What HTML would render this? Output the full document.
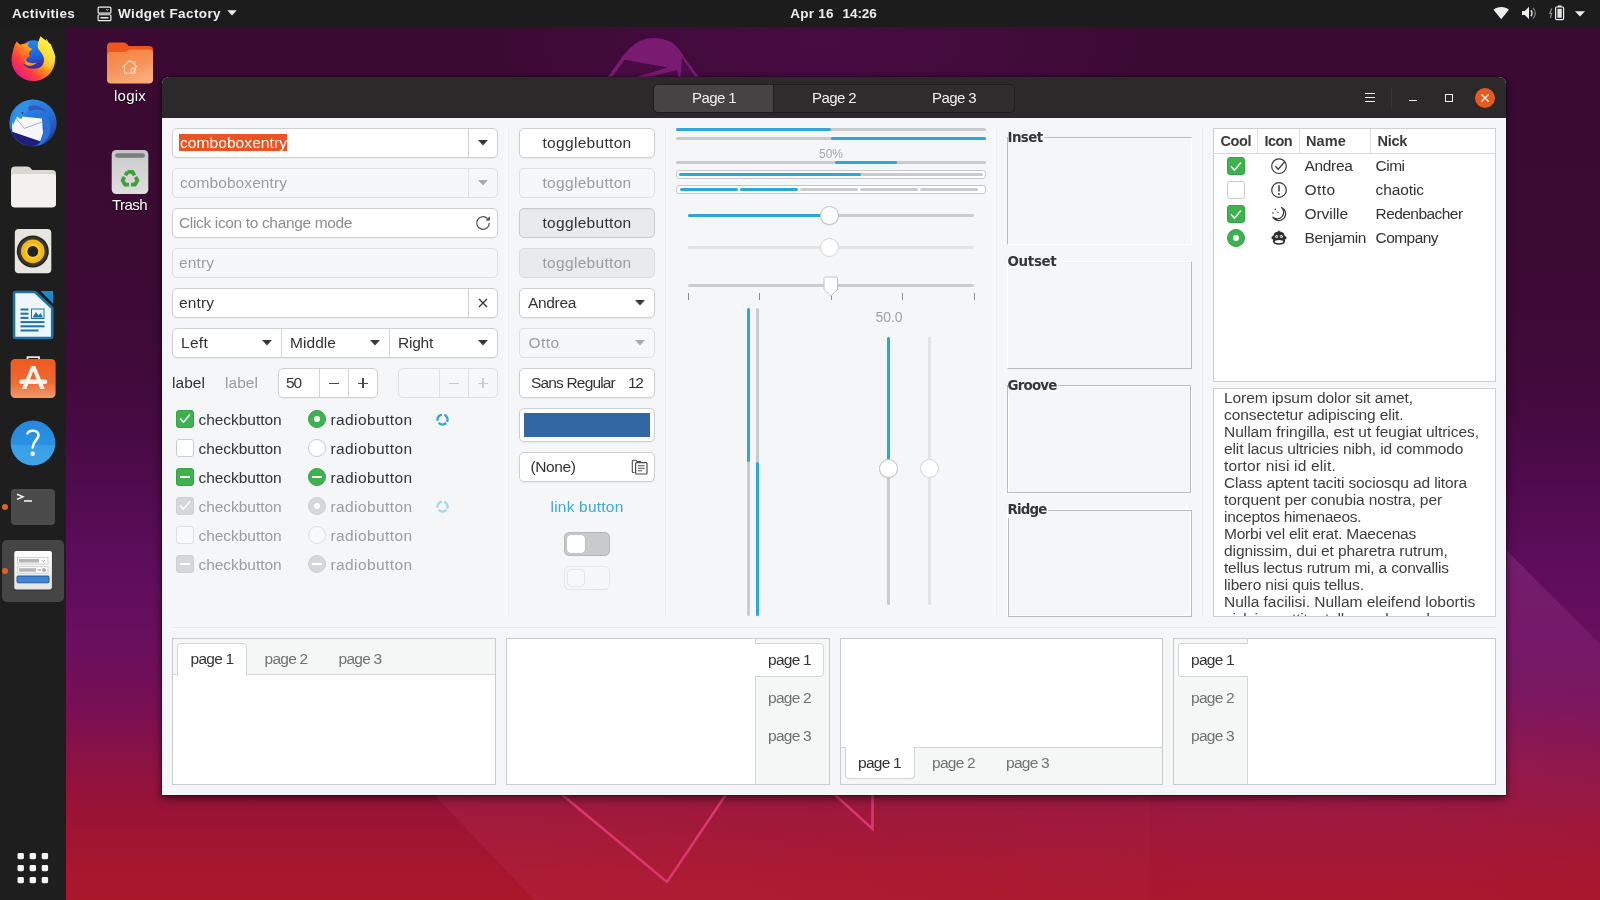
<!DOCTYPE html>
<html lang="en"><head><meta charset="utf-8"><title>Widget Factory</title>
<style>
*{box-sizing:border-box}
html,body{margin:0;padding:0}
body{width:1600px;height:900px;overflow:hidden;position:relative;font-family:"Liberation Sans",sans-serif;font-size:15px;color:#333;
 background:#5a0c50}
.abs,.abs *{position:absolute}
#desk{left:0;top:0;width:1600px;height:900px;overflow:hidden;
 background:
 radial-gradient(ellipse 520px 130px at 1330px 800px, rgba(165,35,85,.38), rgba(165,35,85,0) 100%),
 radial-gradient(ellipse 330px 120px at 820px 40px, rgba(84,12,80,.55), rgba(84,12,80,0) 100%),
 linear-gradient(180deg,#3b0a33 0px,#3c0a34 300px,#430a3e 400px,#4e0b4c 480px,#5c0d5a 560px,#690f5e 640px,#760f56 700px,#8b1243 760px,#9c1434 820px,#a7162d 870px,#aa172b 900px);}
#topbar{left:0;top:0;width:1600px;height:27px;background:#1c1c1c;color:#eeeeec;font-weight:bold;font-size:13.5px}
#dock{left:0;top:27px;width:66px;height:873px;background:#1e1e1e}
#desk{will-change:transform}
.t{white-space:nowrap;line-height:20px;height:20px}
</style></head><body>
<div id="desk" class="abs">
<svg class="abs" style="left:0;top:0" width="1600" height="900" viewBox="0 0 1600 900">
<defs><linearGradient id="fct" x1="0" y1="0" x2="0" y2="1"><stop offset="0" stop-color="#8a2c7c" stop-opacity=".55"/><stop offset="1" stop-color="#8a2c7c" stop-opacity="0"/></linearGradient><linearGradient id="fc2" gradientUnits="userSpaceOnUse" x1="437" y1="0" x2="1150" y2="0"><stop offset="0" stop-color="#c8466e" stop-opacity=".15"/><stop offset="1" stop-color="#c8466e" stop-opacity=".04"/></linearGradient></defs>
<path d="M430 790L534 900H1150V790z" fill="url(#fc2)"/>
<path d="M1500 544L1600 644V830H1500z" fill="url(#fct)"/>
<path d="M607 78L622 57Q631 45 641 40.500Q655 35 671 42Q679 47 684 57L699.500 78z" fill="#7a1b72"/>
<path d="M624.500 59.800L668 67.600 633 78H611.500z" fill="#480c43"/><path d="M645 78L677 70 678.500 78z" fill="#480c43"/><path d="M682 57.500L696 78H680.500z" fill="#4c0d4b"/>
<path d="M560 793L667 882 727 793" fill="none" stroke="#e23a74" stroke-opacity=".9" stroke-width="2.500"/>
<path d="M833 793L872.500 829V793" fill="none" stroke="#e23a74" stroke-opacity=".9" stroke-width="2.500"/>
</svg>
<div id="topbar" class="abs">
 <span class="t" style="letter-spacing:0.30px;left:12px;top:4px">Activities</span>
 <svg style="left:96.500px;top:5.500px" width="15" height="16" viewBox="0 0 16 17"><g fill="none" stroke="#eeeeec" stroke-width="1.3"><rect x="1.2" y="1.2" width="13.6" height="6.3" rx="1"/><rect x="1.2" y="9.3" width="13.6" height="6.3" rx="1"/></g><rect x="3.6" y="11.7" width="8.6" height="1.6" fill="#eeeeec"/><path d="M9.8 3.4l1.2 1.2 1.2-1.2" fill="none" stroke="#eeeeec" stroke-width="1"/></svg>
 <span class="t" style="letter-spacing:0.40px;left:118px;top:4px">Widget Factory</span>
 <svg style="left:227px;top:10px" width="10" height="6" viewBox="0 0 10 6"><path d="M0.3 0.3h9.4L5 5.6z" fill="#eeeeec"/></svg>
 <span class="t" style="letter-spacing:0.24px;left:790.300px;top:4px">Apr 16</span>
 <span class="t" style="letter-spacing:-0.01px;left:842.400px;top:4px">14:26</span>
 <svg style="left:1492px;top:5px" width="18" height="16" viewBox="0 0 18 16"><path d="M9.200 14.200L1.500 4.800C3.500 3 6.200 2 9.200 2s5.700 1 7.700 2.800z" fill="#eeeeec"/></svg>
 <svg style="left:1520px;top:5px" width="18" height="17" viewBox="0 0 18 17"><path d="M2 6h2.800l4.200-4.200v12.400l-4.200-4.200H2z" fill="#eeeeec"/><path d="M10.800 5.200c1.600 1.600 1.600 4.400 0 6" fill="none" stroke="#eeeeec" stroke-width="1.400"/><path d="M13 2.800c3 3 3 7.800 0 10.800" fill="none" stroke="#8a8a8a" stroke-width="1.200"/></svg>
 <svg style="left:1548px;top:4px" width="18" height="18" viewBox="0 0 18 18"><path d="M3.800 4.500L1.800 9.300h1.800L2.400 14" fill="none" stroke="#8e8e8e" stroke-width="1.200"/><rect x="7.600" y="3" width="8" height="12.600" rx="1.200" fill="none" stroke="#eeeeec" stroke-width="1.200"/><rect x="9.800" y="1.400" width="3.600" height="1.600" fill="#eeeeec"/><rect x="9.400" y="4.800" width="4.400" height="9" fill="#dededc"/></svg>
 <svg style="left:1575px;top:10.500px" width="10" height="6" viewBox="0 0 10 6"><path d="M0 0.300h10L5 5.600z" fill="#eeeeec"/></svg>
</div>
<div id="dock" class="abs"></div>
<div class="abs" id="dockicons" style="left:0;top:0;width:66px;height:900px">
<!-- firefox -->
<svg style="left:10px;top:35px" width="47" height="48" viewBox="0 0 47 48">
<defs><linearGradient id="ffg" gradientUnits="userSpaceOnUse" x1="42" y1="6" x2="6" y2="40"><stop offset="0" stop-color="#fff350"/><stop offset="0.28" stop-color="#ffc72e"/><stop offset="0.52" stop-color="#ff8a1c"/><stop offset="0.74" stop-color="#ff3d3f"/><stop offset="1" stop-color="#e2168c"/></linearGradient>
<linearGradient id="ffb" x1="0.4" y1="0" x2="0.55" y2="1"><stop offset="0" stop-color="#1f8bf0"/><stop offset="0.55" stop-color="#1f62dc"/><stop offset="1" stop-color="#3b2495"/></linearGradient>
<linearGradient id="ffy" gradientUnits="userSpaceOnUse" x1="42" y1="6" x2="6" y2="40"><stop offset="0" stop-color="#fff350"/><stop offset="0.3" stop-color="#ffdd38"/><stop offset="0.43" stop-color="#ffb92a"/><stop offset="0.53" stop-color="#ff8a1c"/></linearGradient></defs>
<circle cx="23.300" cy="24.300" r="21.800" fill="url(#ffg)"/>
<path d="M7 6.300L8 0H31L28 12H10z" fill="#1e1e1e"/>
<circle cx="23.500" cy="19.500" r="14.300" fill="url(#ffb)"/>
<path d="M7 6.300c0.800 1.700 2 2.800 3.400 3.400c2-1 4-1.200 5.800-0.800l2.600-2c-0.300 1.600-0.600 2.800-1.200 3.800c1 1.200 2.600 2.400 4.900 3.400c-1.400 1-2.800 2-3.400 3.400c-0.500 1.400-0.200 2.800 0.900 3.800c-1.600 0.400-3 1.500-3.800 3c-0.600 1.400-0.400 3 0.300 4.700H4C1.500 21 2.500 12 7 6.300z" fill="url(#ffg)"/>
<path d="M30.300 1.300C29.300 5 27.200 8 27.800 12C28.500 16 33.400 18 34 24C34.300 28 32 32 28 34.500L40 35 45.500 22 41 9.500z" fill="url(#ffy)"/>
<path d="M36.500 3.500l2.500 5-3-1.500z" fill="#ffe34a"/>
<path d="M14.500 23.500C16.500 27.600 22 29.300 26.800 27.300C24.500 31 19 31.800 15.300 29.200z" fill="#ff971d"/>
</svg>
<!-- thunderbird -->
<svg style="left:8px;top:98px" width="50" height="50" viewBox="0 0 50 50">
<defs><linearGradient id="tbg" x1="0.25" y1="0" x2="0.75" y2="1"><stop offset="0" stop-color="#2d8ee6"/><stop offset="0.5" stop-color="#2670d6"/><stop offset="0.8" stop-color="#2a4db4"/><stop offset="1" stop-color="#2a3596"/></linearGradient></defs>
<circle cx="25" cy="25" r="23.600" fill="url(#tbg)"/>
<path d="M2.500 30C4.500 40 13 47.500 24 48.500L33 44 4.300 33z" fill="#1d1f78"/>
<path d="M6.300 17.700L34 20.500 35 35 32.300 43.300 4.300 33.700 4 27z" fill="#f6f6fb"/>
<path d="M6.500 18.200L16.300 30.300 34.200 24" fill="none" stroke="#8e8e9c" stroke-width="0.700"/>
<path d="M5 27L3.800 22C5 11 14 3 26 1.600C21.500 5 19 9.500 19.500 14C17 14.500 14.500 17 13.200 21.500L9 18.500z" fill="#2f92e8"/>
<circle cx="14.500" cy="15" r="0.900" fill="#142a6a"/>
<path d="M33 13C41 17 44.500 27 41.500 36C39.500 42 35 46 29.500 48C33.500 43 35.500 38 35 32L36.500 30 34.800 28 36 26 34.500 24C35 20 34.500 16.500 33 13z" fill="#2a72d8"/>
<path d="M20 9C26 6 34 8 38.500 14C34 11 27 10.500 22 13z" fill="#3a3aa8" opacity=".55"/>
</svg>
<!-- files -->
<svg style="left:10px;top:165px" width="47" height="44" viewBox="0 0 47 44">
<path d="M1 5.5Q1 1.5 5 1.5h12q2.5 0 4 2l1.2 1.6H42q4 0 4 4V38q0 4-4 4H5q-4 0-4-4z" fill="#dad7d0"/>
<path d="M1 12.5q0-3.500 3.500-3.500h38q3.500 0 3.500 3.500V38.500q0 4-4 4H5q-4 0-4-4z" fill="#f2f1ee"/>
</svg>
<!-- rhythmbox -->
<svg style="left:14px;top:228px" width="38" height="46" viewBox="0 0 38 46">
<rect x="0.8" y="1" width="36.500" height="44.300" rx="4" fill="#e7e5df"/>
<circle cx="18.800" cy="23.400" r="16" fill="#25231f"/><circle cx="18.800" cy="23.400" r="14.500" fill="#3a3731"/>
<circle cx="18.800" cy="23.400" r="11.800" fill="#f0b81b"/><circle cx="18.800" cy="23.400" r="8" fill="#f6c92b"/>
<circle cx="18.800" cy="23.400" r="5.400" fill="#24221e"/>
</svg>
<!-- writer -->
<svg style="left:12px;top:290px" width="42" height="50" viewBox="0 0 42 50">
<path d="M2 3.500Q2 2 3.500 2h19.500L40.200 18v28.500q0 1.500-1.500 1.500H3.500Q2 48 2 46.500z" fill="#eef6fb" stroke="#1b74a8" stroke-width="2.600" stroke-linejoin="round"/>
<path d="M28.500 1h12.700v12.700z" fill="#2289c8"/>
<g fill="#1b74a8"><rect x="8.500" y="18.500" width="8" height="2"/><rect x="8.500" y="22.700" width="8" height="2"/><rect x="8.500" y="26.900" width="8" height="2"/><rect x="8.500" y="31.100" width="24" height="2"/><rect x="8.500" y="35.300" width="24" height="2"/><rect x="8.500" y="39.500" width="18" height="2"/>
<path d="M19 18.500h13.500v10.400H19z M20 19.500v8.400h11.500v-8.400z" fill-rule="evenodd"/><path d="M20.500 27.500l3.500-5.500 2.500 3.500 2-2.500 2.500 4.500z"/></g>
</svg>
<!-- software -->
<svg style="left:9px;top:354px" width="48" height="46" viewBox="0 0 48 46">
<defs><linearGradient id="swg" x1="0" y1="0" x2="0" y2="1"><stop offset="0" stop-color="#ef5a1f"/><stop offset="0.6" stop-color="#ee6a33"/><stop offset="1" stop-color="#f19a6c"/></linearGradient></defs>
<path d="M18.500 6V3.200h11.500V6" fill="none" stroke="#f3e6de" stroke-width="1.800"/>
<rect x="1.600" y="5" width="45" height="39" rx="4.500" fill="url(#swg)"/>
<path d="M12.800 35L22.300 12h4L35.800 35h-4.600L24.300 17 17.400 35z" fill="#fdf3ec"/>
<rect x="10.200" y="25.400" width="28.200" height="4.600" rx="2.300" fill="#fdf3ec"/>
</svg>
<!-- help -->
<svg style="left:10px;top:420px" width="46" height="46" viewBox="0 0 46 46">
<defs><linearGradient id="hlg" x1="0" y1="0" x2="0" y2="1"><stop offset="0" stop-color="#2487de"/><stop offset="0.54" stop-color="#2a92e2"/><stop offset="0.55" stop-color="#3a9fe6"/><stop offset="1" stop-color="#3ea4e8"/></linearGradient></defs>
<circle cx="23" cy="23" r="22.400" fill="url(#hlg)"/>
<path d="M17.500 13.500c1-3.500 10.500-4.500 11 1.500 0.300 4.500-5.500 5.500-5.800 12.500" fill="none" stroke="#f4f8fc" stroke-width="2.600" stroke-linecap="round"/>
<circle cx="22.700" cy="33.800" r="2.300" fill="#f4f8fc"/>
</svg>
<!-- terminal -->
<div style="left:11px;top:489px;width:44px;height:36px;border-radius:4px;background:#4b4b4b"></div>
<svg style="left:15px;top:492px" width="20" height="12" viewBox="0 0 20 12"><path d="M2 2.200l6 2.600-6 2.600" fill="none" stroke="#f2f2f2" stroke-width="1.500"/><rect x="9" y="8.200" width="8" height="1.600" fill="#f2f2f2"/></svg>
<div style="left:2px;top:504px;width:6px;height:6px;border-radius:3px;background:#e0622a"></div>
<!-- widget factory (active) -->
<div style="left:2px;top:540px;width:62px;height:62px;border-radius:5px;background:#454545"></div>
<div style="left:2px;top:568px;width:6px;height:6px;border-radius:3px;background:#e0622a"></div>
<svg style="left:13px;top:550px" width="41" height="42" viewBox="0 0 41 42">
<defs><linearGradient id="wfg" x1="0" y1="0" x2="0" y2="1"><stop offset="0" stop-color="#ffffff"/><stop offset="1" stop-color="#e4e4e4"/></linearGradient></defs>
<rect x="0.500" y="38.500" width="40" height="2" rx="1" fill="#2e2e2e" opacity=".6"/>
<rect x="1.300" y="1" width="37.600" height="38.600" rx="2" fill="url(#wfg)"/>
<rect x="4.500" y="7.500" width="30.500" height="6.500" fill="#fbfbfb" stroke="#c9c9c9" stroke-width=".8"/><rect x="6" y="9" width="20" height="3.500" fill="#b5b5b5"/>
<path d="M28.500 10l1.700 1.700 1.700-1.700" fill="none" stroke="#9a9a9a" stroke-width=".9"/>
<rect x="4.500" y="16.700" width="30.500" height="6.500" fill="#fbfbfb" stroke="#c9c9c9" stroke-width=".8"/><rect x="6" y="18.200" width="17" height="3.500" fill="#b5b5b5"/><rect x="24.500" y="19.400" width="3.500" height="1.200" fill="#a9a9a9"/><circle cx="31" cy="20" r="1.900" fill="#a9a9a9"/>
<rect x="4" y="26" width="32" height="6.800" rx="1" fill="#3d86d3" stroke="#1f4f94" stroke-width=".9"/>
</svg>
<!-- show apps -->
<svg style="left:17px;top:852px" width="32" height="32" viewBox="0 0 32 32"><g fill="#f6f6f6">
<rect x="0.500" y="1" width="6.400" height="6.200" rx="1.400"/><rect x="12.600" y="1" width="6.400" height="6.200" rx="1.400"/><rect x="24.700" y="1" width="6.400" height="6.200" rx="1.400"/>
<rect x="0.500" y="13" width="6.400" height="6.200" rx="1.400"/><rect x="12.600" y="13" width="6.400" height="6.200" rx="1.400"/><rect x="24.700" y="13" width="6.400" height="6.200" rx="1.400"/>
<rect x="0.500" y="25" width="6.400" height="6.200" rx="1.400"/><rect x="12.600" y="25" width="6.400" height="6.200" rx="1.400"/><rect x="24.700" y="25" width="6.400" height="6.200" rx="1.400"/></g></svg>
</div>
<!-- desktop icons -->
<div class="abs" style="left:66px;top:27px;width:100px;height:200px">
<svg style="left:40px;top:14px" width="50" height="44" viewBox="0 0 50 44">
<defs><linearGradient id="fdg" x1="0" y1="0" x2="0.350" y2="1"><stop offset="0" stop-color="#f5823c"/><stop offset="0.6" stop-color="#f6935a"/><stop offset="1" stop-color="#f8ab78"/></linearGradient></defs>
<path d="M1 5.500Q1 1.500 5 1.500h12.500q2.500 0 4 2l1.200 1.600H43q4 0 4 4V38q0 4-4 4H5q-4 0-4-4z" fill="#f0561b"/>
<path d="M1 14.500q0-3.500 3.500-3.500h14q2 0 3.200-1.300q1.200-1.200 3.200-1.200H43.500q3.500 0 3.500 3.500V38.500q0 4-4 4H5q-4 0-4-4z" fill="url(#fdg)"/>
<path d="M16.500 27.500l7.500-7 7.500 7M18.500 26v7.500h11V26M25.300 33.500v-5h2.800v5M29 21.300v2.400" fill="none" stroke="#fde0c4" stroke-opacity=".92" stroke-width="1.100" transform="translate(0 -1.200)"/>
</svg>
<span class="t" style="letter-spacing:0.23px;left:48px;top:59px;color:#fff;text-shadow:0 1px 2px rgba(0,0,0,.8)">logix</span>
<svg style="left:45px;top:122px" width="38" height="46" viewBox="0 0 38 46">
<defs><linearGradient id="trg" x1="0" y1="0" x2="0" y2="1"><stop offset="0" stop-color="#c4c4c4"/><stop offset="0.250" stop-color="#cfcfcf"/><stop offset="1" stop-color="#dedede"/></linearGradient></defs>
<rect x="0.700" y="1" width="36.600" height="44" rx="4.500" fill="url(#trg)"/>
<rect x="4" y="4.200" width="30" height="4.600" rx="2.300" fill="#7d7d7d"/>
<path d="M15.800 21.300H22.200L28.300 31.800 25.100 37.200H12.900L9.700 31.800z" fill="none" stroke="#3f9f3c" stroke-width="4.700" stroke-linejoin="round" stroke-dasharray="11.270 2.400 16.050 2.400 16.050 2.400 4.870" transform="translate(19 29.600) scale(.8) translate(-19 -29.600)"/>
</svg>
<span class="t" style="letter-spacing:-0.56px;left:46px;top:168px;color:#fff;text-shadow:0 1px 2px rgba(0,0,0,.8)">Trash</span>
</div>
<style>
#win{left:162px;top:77px;width:1344px;height:718px;border-radius:7px 7px 0 0;background:#f4f6f7;box-shadow:0 0 0 1px rgba(20,5,20,.22),0 5px 10px rgba(0,0,0,.32),0 1px 5px 1px rgba(0,0,0,.28)}
#hdr{left:0;top:0;width:1344px;height:40.500px;border-radius:7px 7px 0 0;background:#2b292a;color:#f0f0f0}
#c{left:-162px;top:-77px;width:1600px;height:900px;font-size:15.500px}
.e{background:#fff;border:1px solid #cdcfd1;border-radius:5px;box-shadow:0 1px 0 rgba(0,0,0,.03)}
.d{background:#f5f7f8;border:1px solid #dddfe1;border-radius:5px}
.dt{color:#9b9d9f}
.b{background:#fff;border:1px solid #cdcfd1;border-radius:5px;box-shadow:0 1px 1px rgba(0,0,0,.05)}
.vl{width:1px;background:#d2d4d6}
.hl{height:1px;background:#e8eaeb}
</style>
<div id="win" class="abs">
<div id="hdr">
 <div style="left:491px;top:6.500px;width:362px;height:29.500px;border:1px solid #1f1d1e;border-radius:5px;background:#2e2c2d"></div>
 <div style="left:491px;top:6.500px;width:121px;height:29.500px;border:1px solid #1f1d1e;border-radius:5px 0 0 5px;background:#454344"></div>
 <span class="t" style="letter-spacing:-0.59px;left:530px;top:11px;font-size:15px">Page 1</span>
 <span class="t" style="letter-spacing:-0.59px;left:650px;top:11px;font-size:15px">Page 2</span>
 <span class="t" style="letter-spacing:-0.59px;left:770px;top:11px;font-size:15px">Page 3</span>
 <svg style="left:1201px;top:14px" width="14" height="14" viewBox="0 0 14 14"><path d="M2 2.500h10M2 6.500h10M2 10.500h10" stroke="#f0f0f0" stroke-width="1.200"/></svg>
 <div style="left:1229px;top:11px;width:1px;height:20px;background:#383637"></div>
 <div style="left:1247px;top:22.5px;width:8px;height:1.500px;background:#f0f0f0"></div>
 <div style="left:1283px;top:17px;width:8px;height:8px;border:1.500px solid #f0f0f0"></div>
 <div style="left:1313px;top:11px;width:20px;height:20px;border-radius:10px;background:#e8591f"></div>
 <svg style="left:1318px;top:16px" width="10" height="10" viewBox="0 0 10 10"><path d="M1.300 1.300l7.400 7.400M8.700 1.300l-7.400 7.400" stroke="#fff" stroke-width="1.300"/></svg>
</div>
<div id="c">
<style>
.arr{width:10px;height:6px}
.ck{width:18px;height:18px;border-radius:3px}
.rd{width:18px;height:18px;border-radius:9px}
.on{background:#3eb24f;border:1px solid #35a246}
.off{background:#fff;border:1px solid #c9cbcd}
.don{background:#d5d7d8;border:1px solid #ced0d1}
.doff{background:#f8f9fa;border:1px solid #dcdee0}
</style>
<!-- row1 comboboxentry -->
<div class="e" style="left:172px;top:128px;width:297px;height:30px;border-radius:5px 0 0 5px"></div>
<div class="b" style="left:468px;top:128px;width:30px;height:30px;border-radius:0 5px 5px 0"></div>
<div style="left:179px;top:134px;width:108px;height:17px;background:#e95420"></div>
<span class="t" style="letter-spacing:0.08px;left:180px;top:133px;color:#fff">comboboxentry</span>
<svg class="arr" style="left:478px;top:140px" viewBox="0 0 10 6"><path d="M0 0h10L5 5.600z" fill="#3a3a3a"/></svg>
<!-- row2 -->
<div class="d" style="left:172px;top:168px;width:297px;height:30px;border-radius:5px 0 0 5px"></div>
<div class="d" style="left:468px;top:168px;width:30px;height:30px;border-radius:0 5px 5px 0"></div>
<span class="t dt" style="letter-spacing:0.08px;left:180px;top:173px">comboboxentry</span>
<svg class="arr" style="left:478px;top:180px" viewBox="0 0 10 6"><path d="M0 0h10L5 5.600z" fill="#a9abad"/></svg>
<!-- row3 -->
<div class="e" style="left:172px;top:208px;width:326px;height:30px"></div>
<span class="t" style="letter-spacing:-0.35px;left:179px;top:213px;color:#8b8d8f">Click icon to change mode</span>
<svg style="left:474px;top:214px" width="18" height="18" viewBox="0 0 18 18"><path d="M15.300 9a6.300 6.300 0 1 1-1.900-4.500" fill="none" stroke="#4a4a4a" stroke-width="1.200"/><path d="M15.800 2.200v4.300h-4.300z" fill="#4a4a4a"/></svg>
<!-- row4 -->
<div class="d" style="left:172px;top:248px;width:326px;height:30px"></div>
<span class="t dt" style="letter-spacing:0.11px;left:179px;top:253px">entry</span>
<!-- row5 -->
<div class="e" style="left:172px;top:288px;width:297px;height:30px;border-radius:5px 0 0 5px"></div>
<div class="b" style="left:468px;top:288px;width:30px;height:30px;border-radius:0 5px 5px 0"></div>
<span class="t" style="letter-spacing:0.11px;left:179px;top:293px">entry</span>
<svg style="left:478px;top:298px" width="10" height="10" viewBox="0 0 10 10"><path d="M1 1l8 8M9 1l-8 8" stroke="#3a3a3a" stroke-width="1.400"/></svg>
<!-- row6 -->
<div class="b" style="left:172px;top:328px;width:326px;height:30px"></div>
<div class="vl" style="left:281px;top:329px;height:28px"></div><div class="vl" style="left:389px;top:329px;height:28px"></div>
<span class="t" style="letter-spacing:0.29px;left:181px;top:333px">Left</span>
<span class="t" style="letter-spacing:0.05px;left:290px;top:333px">Middle</span>
<span class="t" style="letter-spacing:-0.24px;left:398px;top:333px">Right</span>
<svg class="arr" style="left:262px;top:340px" viewBox="0 0 10 6"><path d="M0 0h10L5 5.600z" fill="#3a3a3a"/></svg>
<svg class="arr" style="left:370px;top:340px" viewBox="0 0 10 6"><path d="M0 0h10L5 5.600z" fill="#3a3a3a"/></svg>
<svg class="arr" style="left:478px;top:340px" viewBox="0 0 10 6"><path d="M0 0h10L5 5.600z" fill="#3a3a3a"/></svg>
<!-- row7 -->
<span class="t" style="letter-spacing:0.05px;left:172px;top:373px">label</span>
<span class="t dt" style="letter-spacing:0.05px;left:225px;top:373px">label</span>
<div class="e" style="left:278px;top:368px;width:100px;height:30px"></div>
<div class="vl" style="left:319px;top:369px;height:28px"></div><div class="vl" style="left:348px;top:369px;height:28px"></div>
<span class="t" style="letter-spacing:-1.12px;left:286px;top:373px">50</span>
<div style="left:329px;top:382.500px;width:10px;height:1.300px;background:#4a4a4a"></div>
<div style="left:358px;top:382.500px;width:10px;height:1.300px;background:#4a4a4a"></div><div style="left:362.400px;top:378px;width:1.300px;height:10px;background:#4a4a4a"></div>
<div class="d" style="left:398px;top:368px;width:100px;height:30px"></div>
<div class="vl" style="left:439px;top:369px;height:28px;background:#dfe1e3"></div><div class="vl" style="left:468px;top:369px;height:28px;background:#dfe1e3"></div>
<div style="left:449px;top:382.500px;width:10px;height:1.300px;background:#c9cbcd"></div>
<div style="left:478px;top:382.500px;width:10px;height:1.300px;background:#c9cbcd"></div><div style="left:482.400px;top:378px;width:1.300px;height:10px;background:#c9cbcd"></div>
<!-- check/radio rows -->
<div class="ck on" style="left:176px;top:410px"></div><svg style="left:179px;top:413px" width="12" height="11" viewBox="0 0 12 11"><path d="M1 5.500l3.400 3.600L11 1.500" fill="none" stroke="#fff" stroke-width="1.400"/></svg>
<span class="t" style="letter-spacing:-0.05px;left:198.500px;top:409.500px">checkbutton</span>
<div class="rd on" style="left:308px;top:410px"></div><div style="left:314px;top:416px;width:6px;height:6px;border-radius:3px;background:#fff"></div>
<span class="t" style="letter-spacing:0.40px;left:330.500px;top:409.500px">radiobutton</span>
<div class="ck off" style="left:176px;top:439px"></div>
<span class="t" style="letter-spacing:-0.05px;left:198.500px;top:438.500px">checkbutton</span>
<div class="rd off" style="left:308px;top:439px"></div>
<span class="t" style="letter-spacing:0.40px;left:330.500px;top:438.500px">radiobutton</span>
<div class="ck on" style="left:176px;top:468px"></div><div style="left:180px;top:476px;width:10px;height:2px;background:#fff"></div>
<span class="t" style="letter-spacing:-0.05px;left:198.500px;top:467.500px">checkbutton</span>
<div class="rd on" style="left:308px;top:468px"></div><div style="left:312px;top:476px;width:10px;height:2px;background:#fff"></div>
<span class="t" style="letter-spacing:0.40px;left:330.500px;top:467.500px">radiobutton</span>
<div class="ck don" style="left:176px;top:497px"></div><svg style="left:179px;top:500px" width="12" height="11" viewBox="0 0 12 11"><path d="M1 5.500l3.400 3.600L11 1.500" fill="none" stroke="#fff" stroke-width="1.400"/></svg>
<span class="t dt" style="letter-spacing:-0.05px;left:198.500px;top:496.500px">checkbutton</span>
<div class="rd don" style="left:308px;top:497px"></div><div style="left:314px;top:503px;width:6px;height:6px;border-radius:3px;background:#fff"></div>
<span class="t dt" style="letter-spacing:0.40px;left:330.500px;top:496.500px">radiobutton</span>
<div class="ck doff" style="left:176px;top:526px"></div>
<span class="t dt" style="letter-spacing:-0.05px;left:198.500px;top:525.500px">checkbutton</span>
<div class="rd doff" style="left:308px;top:526px"></div>
<span class="t dt" style="letter-spacing:0.40px;left:330.500px;top:525.500px">radiobutton</span>
<div class="ck don" style="left:176px;top:555px"></div><div style="left:180px;top:563px;width:10px;height:2px;background:#fff"></div>
<span class="t dt" style="letter-spacing:-0.05px;left:198.500px;top:554.500px">checkbutton</span>
<div class="rd don" style="left:308px;top:555px"></div><div style="left:312px;top:563px;width:10px;height:2px;background:#fff"></div>
<span class="t dt" style="letter-spacing:0.40px;left:330.500px;top:554.500px">radiobutton</span>
<!-- spinners -->
<svg style="left:435.500px;top:412.800px" width="13" height="13" viewBox="0 0 13 13"><circle cx="6.500" cy="6.500" r="5" fill="none" stroke="#35a6d4" stroke-width="2.300" stroke-dasharray="8.300 2.170" transform="rotate(42.500 6.500 6.500)"/></svg>
<svg style="left:435.500px;top:499.800px" width="13" height="13" viewBox="0 0 13 13"><circle cx="6.500" cy="6.500" r="5" fill="none" stroke="#a5d7ea" stroke-width="2.300" stroke-dasharray="8.300 2.170" transform="rotate(42.500 6.500 6.500)"/></svg>
<!-- separators -->
<div class="vl" style="left:508px;top:128px;height:488px;background:#ebedee"></div>
<div class="vl" style="left:665px;top:128px;height:488px;background:#ebedee"></div>
<div class="vl" style="left:996px;top:128px;height:488px;background:#ebedee"></div>
<div class="vl" style="left:1202px;top:128px;height:488px;background:#ebedee"></div>
<div class="hl" style="left:172px;top:626.500px;width:1324px"></div>
<!-- toggle column -->
<div class="b" style="left:519px;top:128px;width:136px;height:30px"></div>
<span class="t" style="letter-spacing:0.31px;left:542.500px;top:133px">togglebutton</span>
<div class="d" style="left:519px;top:168px;width:136px;height:30px"></div>
<span class="t dt" style="letter-spacing:0.31px;left:542.500px;top:173px">togglebutton</span>
<div class="b" style="left:519px;top:208px;width:136px;height:30px;background:#e9eaeb;border-color:#c9cbcd;box-shadow:inset 0 1px 1px rgba(0,0,0,.04)"></div>
<span class="t" style="letter-spacing:0.31px;left:542.500px;top:213px">togglebutton</span>
<div class="d" style="left:519px;top:248px;width:136px;height:30px;background:#e9eaeb;border-color:#d9dbdc"></div>
<span class="t dt" style="letter-spacing:0.31px;left:542.500px;top:253px">togglebutton</span>
<div class="b" style="left:519px;top:288px;width:136px;height:30px"></div>
<span class="t" style="letter-spacing:-0.33px;left:528px;top:293px">Andrea</span>
<svg class="arr" style="left:635px;top:300px" viewBox="0 0 10 6"><path d="M0 0h10L5 5.600z" fill="#3a3a3a"/></svg>
<div class="d" style="left:519px;top:328px;width:136px;height:30px"></div>
<span class="t dt" style="letter-spacing:0.43px;left:528.500px;top:333px">Otto</span>
<svg class="arr" style="left:635px;top:340px" viewBox="0 0 10 6"><path d="M0 0h10L5 5.600z" fill="#a9abad"/></svg>
<div class="b" style="left:519px;top:368px;width:136px;height:30px"></div>
<span class="t" style="letter-spacing:-0.83px;left:531px;top:373px">Sans Regular</span>
<span class="t" style="letter-spacing:-1.38px;left:628px;top:373px">12</span>
<div class="b" style="left:519px;top:408px;width:136px;height:34px"></div>
<div style="left:524px;top:413px;width:126px;height:24px;background:#3267a3"></div>
<div class="b" style="left:519px;top:452px;width:136px;height:30px"></div>
<span class="t" style="letter-spacing:-0.40px;left:530.500px;top:457px">(None)</span>
<svg style="left:631px;top:458px" width="18" height="18" viewBox="0 0 18 18"><path d="M3.500 14.500h-1.200q-1 0-1-1V3.200q0-1 1-1h2.700l1.300 1.300h3.700" fill="none" stroke="#4a4a4a" stroke-width="1.100"/><rect x="4.600" y="4.600" width="11.400" height="11.400" rx="1" fill="none" stroke="#4a4a4a" stroke-width="1.200"/><path d="M7 7.800h6.600M7 10.300h6.600M7 12.800h4" stroke="#4a4a4a" stroke-width="1.100"/></svg>
<span class="t" style="letter-spacing:0.21px;left:550.500px;top:497px;color:#3fa9d5">link button</span>
<div style="left:564px;top:532px;width:46px;height:24px;border-radius:5px;background:#c9cacb;border:1px solid #b4b6b8"></div>
<div style="left:567px;top:535px;width:18px;height:18px;border-radius:4px;background:#fff;box-shadow:0 0 1px rgba(0,0,0,.25)"></div>
<div style="left:564px;top:566px;width:46px;height:24px;border-radius:5px;background:#f5f7f8;border:1px solid #e3e5e6"></div>
<div style="left:567px;top:569px;width:18px;height:18px;border-radius:4px;background:#f6f8f9;border:1px solid #e3e5e6"></div>
<!-- progress / scales -->
<style>.tr{background:#c9cbcc;border-radius:2px}.bl{background:#2ca7d6;border-radius:2px}.kn{width:19px;height:19px;border-radius:10px;background:#fff;border:1px solid #bfc1c3;box-shadow:0 1px 1px rgba(0,0,0,.08)}</style>
<div class="tr" style="left:676px;top:128px;width:310px;height:3px"></div><div class="bl" style="left:676px;top:128px;width:155px;height:3px"></div>
<div class="tr" style="left:676px;top:137px;width:310px;height:3px"></div><div class="bl" style="left:831px;top:137px;width:155px;height:3px"></div>
<span class="t" style="letter-spacing:-0.01px;left:819px;top:144px;font-size:12px;color:#a6a8aa">50%</span>
<div class="tr" style="left:676px;top:161px;width:310px;height:3px"></div><div class="bl" style="left:835px;top:161px;width:62px;height:3px"></div>
<div style="left:676px;top:170px;width:310px;height:9px;border:1px solid #c6c8ca;border-radius:3px;background:#fff"></div>
<div class="tr" style="left:679px;top:173px;width:304px;height:3px"></div><div class="bl" style="left:679px;top:173px;width:182px;height:3px"></div>
<div style="left:676px;top:185px;width:310px;height:9px;border:1px solid #c6c8ca;border-radius:3px;background:#fff"></div>
<div class="bl" style="left:680px;top:188px;width:58px;height:3px"></div><div class="bl" style="left:740px;top:188px;width:58px;height:3px"></div>
<div class="tr" style="left:800px;top:188px;width:58px;height:3px"></div><div class="tr" style="left:860px;top:188px;width:58px;height:3px"></div><div class="tr" style="left:920px;top:188px;width:58px;height:3px"></div>
<!-- h scales -->
<div class="tr" style="left:688px;top:214px;width:286px;height:3px"></div><div class="bl" style="left:688px;top:214px;width:141px;height:3px"></div>
<div class="kn" style="left:819.500px;top:206px"></div>
<div class="tr" style="left:688px;top:246px;width:286px;height:3px;background:#e1e3e4"></div>
<div class="kn" style="left:819.500px;top:238px;border-color:#d3d5d7;box-shadow:none"></div>
<div class="tr" style="left:688px;top:284px;width:286px;height:3px"></div>
<svg style="left:823px;top:276px" width="16" height="23" viewBox="0 0 16 23"><path d="M2.500 1h10.500q1.500 0 1.500 1.500v11l-6.700 6.500-6.800-6.500V2.500Q1 1 2.500 1z" fill="#fff" stroke="#bfc1c3" stroke-width="1"/></svg>
<div style="left:688px;top:293px;width:1px;height:7px;background:#8d8f91"></div><div style="left:759px;top:293px;width:1px;height:7px;background:#8d8f91"></div><div style="left:831px;top:296px;width:1px;height:4px;background:#8d8f91"></div><div style="left:902px;top:293px;width:1px;height:7px;background:#8d8f91"></div><div style="left:974px;top:293px;width:1px;height:7px;background:#8d8f91"></div>
<!-- v progress -->
<div class="tr" style="left:747px;top:308px;width:3px;height:308px"></div><div class="bl" style="left:747px;top:308px;width:3px;height:154px"></div>
<div class="tr" style="left:756px;top:308px;width:3px;height:308px"></div><div class="bl" style="left:756px;top:462px;width:3px;height:154px"></div>
<!-- v scales -->
<span class="t" style="letter-spacing:-0.06px;left:875.500px;top:307px;font-size:14px;color:#9fa1a3">50.0</span>
<div class="tr" style="left:887px;top:337px;width:3px;height:268px"></div><div class="bl" style="left:887px;top:337px;width:3px;height:130px"></div>
<div class="kn" style="left:879px;top:459px"></div>
<div class="tr" style="left:927.500px;top:337px;width:3px;height:268px;background:#e1e3e4"></div>
<div class="kn" style="left:919.500px;top:459px;border-color:#d3d5d7;box-shadow:none"></div>
<!-- frames -->
<style>.fl{font:bold 13.400px "DejaVu Sans",sans-serif;color:#363636;background:#f4f6f7;line-height:16px;height:16px;white-space:nowrap;padding-right:1px}</style>
<div style="left:1007px;top:137px;width:185px;height:108px;border:1px solid;border-color:#b9bbbd #fff #fff #b9bbbd"></div>
<span class="fl" style="letter-spacing:-0.59px;left:1007.500px;top:130px">Inset</span>
<div style="left:1007px;top:261px;width:185px;height:108px;border:1px solid;border-color:#fff #b9bbbd #b9bbbd #fff"></div>
<span class="fl" style="letter-spacing:-0.30px;left:1007.500px;top:254px">Outset</span>
<div style="left:1007px;top:385px;width:184px;height:108px;border:1px solid #b9bbbd;box-shadow:1px 1px 0 #fff,inset 1px 1px 0 #fff"></div>
<span class="fl" style="letter-spacing:-0.80px;left:1007.500px;top:378px">Groove</span>
<div style="left:1008px;top:510px;width:184px;height:107px;border:1px solid #b9bbbd;box-shadow:-1px -1px 0 #fff,inset -1px -1px 0 #fff"></div>
<span class="fl" style="letter-spacing:-0.83px;left:1007.500px;top:502px">Ridge</span>
<!-- treeview -->
<div style="left:1213px;top:128px;width:283px;height:254px;background:#fff;border:1px solid #cdcfd1"></div>
<div style="left:1214px;top:153px;width:281px;height:1px;background:#d6d8da"></div>
<div style="left:1257px;top:129px;width:1px;height:24px;background:#dddfe1"></div><div style="left:1299px;top:129px;width:1px;height:24px;background:#dddfe1"></div><div style="left:1370px;top:129px;width:1px;height:24px;background:#dddfe1"></div>
<span class="t" style="letter-spacing:-0.43px;left:1220.500px;top:131px;font-weight:bold;font-size:14.500px;color:#3a3a3a">Cool</span>
<span class="t" style="letter-spacing:-0.58px;left:1264.500px;top:131px;font-weight:bold;font-size:14.500px;color:#3a3a3a">Icon</span>
<span class="t" style="letter-spacing:0.12px;left:1306px;top:131px;font-weight:bold;font-size:14.500px;color:#3a3a3a">Name</span>
<span class="t" style="letter-spacing:-0.29px;left:1377.500px;top:131px;font-weight:bold;font-size:14.500px;color:#3a3a3a">Nick</span>
<div class="ck on" style="left:1227px;top:157px"></div><svg style="left:1230px;top:160.500px" width="12" height="11" viewBox="0 0 12 11"><path d="M1 5.500l3.400 3.600L11 1.500" fill="none" stroke="#fff" stroke-width="1.400"/></svg>
<div class="ck off" style="left:1227px;top:181px"></div>
<div class="ck on" style="left:1227px;top:205px"></div><svg style="left:1230px;top:208.500px" width="12" height="11" viewBox="0 0 12 11"><path d="M1 5.500l3.400 3.600L11 1.500" fill="none" stroke="#fff" stroke-width="1.400"/></svg>
<div class="rd on" style="left:1227px;top:229px"></div><div style="left:1233px;top:235px;width:6px;height:6px;border-radius:3px;background:#fff"></div>
<svg style="left:1270px;top:157px" width="18" height="18" viewBox="0 0 18 18"><circle cx="9" cy="9.200" r="7.300" fill="none" stroke="#3a3a3a" stroke-width="1.200"/><path d="M5.300 9.300l2.900 2.900 6.600-7.600" fill="none" stroke="#3a3a3a" stroke-width="1.300"/></svg>
<svg style="left:1270px;top:181px" width="18" height="18" viewBox="0 0 18 18"><circle cx="9" cy="9" r="7.300" fill="none" stroke="#3a3a3a" stroke-width="1.200"/><path d="M9 4.300v6.300" stroke="#3a3a3a" stroke-width="1.500"/><circle cx="9" cy="12.900" r="1" fill="#3a3a3a"/></svg>
<svg style="left:1270px;top:205px" width="18" height="18" viewBox="0 0 18 18"><path d="M11.500 2.600a6.800 6.800 0 1 1-8.600 9.600a6 6 0 0 0 8.600-9.600z" fill="none" stroke="#3a3a3a" stroke-width="1.200" stroke-linejoin="round"/><circle cx="5.300" cy="4.300" r="0.800" fill="#3a3a3a"/><circle cx="3" cy="8" r="0.800" fill="#3a3a3a"/><circle cx="8" cy="7.300" r="0.700" fill="#3a3a3a"/></svg>
<svg style="left:1270px;top:229px" width="18" height="18" viewBox="0 0 18 18"><path d="M9 1.200l1 1.300q4 0.500 4.600 4.200q2 0.300 2 2q0 1.600-1.800 1.900q0.300 0.600 0.300 1.300q0 3.800-6.100 3.800t-6.100-3.800q0-0.700 0.300-1.300q-1.800-0.300-1.800-1.900q0-1.700 2-2q0.600-3.700 4.600-4.200z" fill="#2e2e2e"/><ellipse cx="9" cy="12.600" rx="4.300" ry="1.600" fill="#fff"/><circle cx="6.700" cy="7.500" r="1.500" fill="#fff"/><circle cx="11.300" cy="7.500" r="1.500" fill="#fff"/><circle cx="6.900" cy="7.700" r="0.700" fill="#2e2e2e"/><circle cx="11.100" cy="7.700" r="0.700" fill="#2e2e2e"/></svg>
<span class="t" style="letter-spacing:-0.33px;left:1304.500px;top:156px">Andrea</span><span class="t" style="letter-spacing:-0.50px;left:1375.500px;top:156px">Cimi</span>
<span class="t" style="letter-spacing:0.43px;left:1304.500px;top:180px">Otto</span><span class="t" style="letter-spacing:-0.09px;left:1375.500px;top:180px">chaotic</span>
<span class="t" style="letter-spacing:-0.06px;left:1304.500px;top:204px">Orville</span><span class="t" style="letter-spacing:-0.55px;left:1375.500px;top:204px">Redenbacher</span>
<span class="t" style="letter-spacing:-0.39px;left:1304.500px;top:228px">Benjamin</span><span class="t" style="letter-spacing:-0.55px;left:1375.500px;top:228px">Company</span>
<!-- textview -->
<div style="left:1213px;top:388px;width:283px;height:229px;background:#fff;border:1px solid #cdcfd1;overflow:hidden;font-size:15.500px;color:#3d3d3d">
<span class="t" style="letter-spacing:-0.08px;left:10px;top:-1px">Lorem ipsum dolor sit amet,</span>
<span class="t" style="letter-spacing:-0.08px;left:10px;top:16px">consectetur adipiscing elit.</span>
<span class="t" style="letter-spacing:-0.04px;left:10px;top:33px">Nullam fringilla, est ut feugiat ultrices,</span>
<span class="t" style="letter-spacing:-0.12px;left:10px;top:50px">elit lacus ultricies nibh, id commodo</span>
<span class="t" style="letter-spacing:0.17px;left:10px;top:67px">tortor nisi id elit.</span>
<span class="t" style="letter-spacing:-0.11px;left:10px;top:84px">Class aptent taciti sociosqu ad litora</span>
<span class="t" style="letter-spacing:-0.08px;left:10px;top:101px">torquent per conubia nostra, per</span>
<span class="t" style="letter-spacing:-0.25px;left:10px;top:118px">inceptos himenaeos.</span>
<span class="t" style="letter-spacing:-0.21px;left:10px;top:135px">Morbi vel elit erat. Maecenas</span>
<span class="t" style="letter-spacing:-0.08px;left:10px;top:152px">dignissim, dui et pharetra rutrum,</span>
<span class="t" style="letter-spacing:-0.19px;left:10px;top:169px">tellus lectus rutrum mi, a convallis</span>
<span class="t" style="letter-spacing:-0.13px;left:10px;top:186px">libero nisi quis tellus.</span>
<span class="t" style="letter-spacing:-0.01px;left:10px;top:203px">Nulla facilisi. Nullam eleifend lobortis</span>
<span class="t" style="letter-spacing:-0.21px;left:10px;top:220px">nisl, in porttitor tellus malesuada</span>
</div>
<style>.nb{background:#fff;border:1px solid #c9cbcd}.ns{background:#f5f6f6}.nt{background:#fff;border:1px solid #d3d5d7}.it{color:#6f7173}</style>
<!-- nb1 top -->
<div class="nb" style="left:172px;top:638px;width:324px;height:147px"></div>
<div class="ns" style="left:173px;top:639px;width:322px;height:36px;border-bottom:1px solid #d3d5d7"></div>
<div class="nt" style="left:177px;top:643px;width:70px;height:33px;border-bottom:0;border-radius:4px 4px 0 0"></div>
<span class="t" style="letter-spacing:-0.74px;left:190.500px;top:649px">page 1</span>
<span class="t it" style="letter-spacing:-0.74px;left:264.500px;top:649px">page 2</span>
<span class="t it" style="letter-spacing:-0.74px;left:338.500px;top:649px">page 3</span>
<!-- nb2 right -->
<div class="nb" style="left:506px;top:638px;width:324px;height:147px"></div>
<div class="ns" style="left:755px;top:639px;width:74px;height:145px;border-left:1px solid #d3d5d7"></div>
<div class="nt" style="left:755px;top:643px;width:69px;height:34px;border-left:0;border-radius:0 4px 4px 0"></div>
<span class="t" style="letter-spacing:-0.74px;left:768px;top:650px">page 1</span>
<span class="t it" style="letter-spacing:-0.74px;left:768px;top:688px">page 2</span>
<span class="t it" style="letter-spacing:-0.74px;left:768px;top:726px">page 3</span>
<!-- nb3 bottom -->
<div class="nb" style="left:840px;top:638px;width:323px;height:147px"></div>
<div class="ns" style="left:841px;top:747px;width:321px;height:37px;border-top:1px solid #d3d5d7"></div>
<div class="nt" style="left:845px;top:747px;width:70px;height:32px;border-top:0;border-radius:0 0 4px 4px"></div>
<span class="t" style="letter-spacing:-0.74px;left:858px;top:753px">page 1</span>
<span class="t it" style="letter-spacing:-0.74px;left:932px;top:753px">page 2</span>
<span class="t it" style="letter-spacing:-0.74px;left:1006px;top:753px">page 3</span>
<!-- nb4 left -->
<div class="nb" style="left:1173px;top:638px;width:323px;height:147px"></div>
<div class="ns" style="left:1174px;top:639px;width:74px;height:145px;border-right:1px solid #d3d5d7"></div>
<div class="nt" style="left:1178px;top:643px;width:70px;height:34px;border-right:0;border-radius:4px 0 0 4px"></div>
<span class="t" style="letter-spacing:-0.74px;left:1191px;top:650px">page 1</span>
<span class="t it" style="letter-spacing:-0.74px;left:1191px;top:688px">page 2</span>
<span class="t it" style="letter-spacing:-0.74px;left:1191px;top:726px">page 3</span>
</div></div>
</div>
</body></html>
